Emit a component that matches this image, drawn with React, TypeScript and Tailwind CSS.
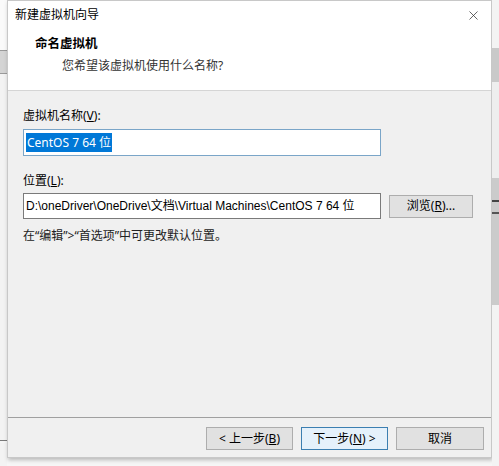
import { X } from "lucide-react";

const cjk = "font-['Segoe_UI','Noto_Sans','Noto_Sans_CJK_SC',sans-serif]";

function WinButton({
  children,
  primary = false,
  width = "w-[87px]",
}: {
  children: React.ReactNode;
  primary?: boolean;
  width?: string;
}) {
  return (
    <button
      className={`${width} h-[23px] flex items-center justify-center text-[12px] text-black border ${
        primary ? "border-[#3c7fb1] bg-[#e5f1fb]" : "border-[#adadad] bg-[#e1e1e1]"
      }`}
    >
      {children}
    </button>
  );
}

export default function App() {
  return (
    <div className={`w-[499px] h-[466px] bg-[#f6f6f6] flex overflow-hidden ${cjk}`}>
      {/* left edge of the window behind */}
      <div className="w-[7px] flex flex-col shrink-0">
        <div className="h-[50px] bg-[#fafafa]" />
        <div className="h-[24px] bg-[#d4d4d4] border-y border-[#9a9a9a]" />
        <div className="flex-1 bg-[#f3f3f3]" />
        <div className="h-[3px] border-t border-[#7a7a7a]" />
        <div className="h-[23px] bg-[#f3f3f3]" />
      </div>

      {/* dialog */}
      <div className="w-[485px] h-[458px] shrink-0 flex flex-col bg-[#f0f0f0] border border-[#c8c8c8] shadow-[1px_2px_4px_rgba(0,0,0,0.25)]">
        <div className="h-[90px] bg-white border-b border-[#d5d5d5] flex flex-col">
          <div className="flex items-center justify-between pl-[7px] pr-[10px] pt-[4px] h-[24px]">
            <span className="text-[12px] text-black leading-none">新建虚拟机向导</span>
            <X className="w-[15px] h-[15px] text-[#333]" strokeWidth={1.2} />
          </div>
          <div className="pl-[27px] mt-[13px] text-[12.5px] font-bold text-black leading-none">命名虚拟机</div>
          <div className="pl-[54px] mt-[9px] text-[12px] text-[#333] leading-none">您希望该虚拟机使用什么名称?</div>
        </div>

        <div className="flex-1 flex flex-col pl-[15px] pt-[19px]">
          <div className="text-[12px] text-black leading-none">
            虚拟机名称(<span className="underline">V</span>):
          </div>
          <div className="mt-[7px] w-[358px] h-[27px] bg-white border border-[#7aa5c8] flex items-center pl-[2px]">
            <span className="bg-[#0078d7] text-white text-[12px] leading-[19px] px-[1px]">CentOS 7 64 位</span>
          </div>

          <div className="mt-[19px] text-[12px] text-black leading-none">
            位置(<span className="underline">L</span>):
          </div>
          <div className="mt-[6px] flex items-center gap-[8px]">
            <div className="w-[358px] h-[26px] bg-white border border-[#7a7a7a] flex items-center pl-[2px] text-[12px] text-black whitespace-nowrap overflow-hidden font-['Liberation_Sans','Noto_Sans_CJK_SC',sans-serif]">
              D:\oneDriver\OneDrive\文档\Virtual Machines\CentOS 7 64 位
            </div>
            <WinButton width="w-[84px]">
              浏览(<span className="underline">R</span>)...
            </WinButton>
          </div>
          <div className="mt-[11px] text-[12px] text-[#222] leading-none">
            在“编辑”&gt;“首选项”中可更改默认位置。
          </div>
        </div>

        <div className="h-[40px] border-t border-[#a0a0a0] flex items-start justify-end gap-[8px] pt-[9px] pr-[7px]">
          <WinButton>
            &lt; 上一步(<span className="underline">B</span>)
          </WinButton>
          <WinButton primary>
            下一步(<span className="underline">N</span>) &gt;
          </WinButton>
          <WinButton width="w-[88px]">取消</WinButton>
        </div>
      </div>

      {/* right edge of the window behind */}
      <div className="w-[7px] flex flex-col shrink-0">
        <div className="h-[48px] bg-[#f3f3f3]" />
        <div className="h-[34px] bg-[#c9c9c9]" />
        <div className="h-[96px] bg-[#eeeeee]" />
        <div className="h-[127px] bg-[#cbcbcb] flex flex-col">
          <div className="h-[22px]" />
          <div className="h-[2px] bg-[#444]" />
          <div className="h-[10px]" />
          <div className="h-[2px] bg-[#555]" />
        </div>
        <div className="flex-1 bg-[#f3f3f3]" />
      </div>
    </div>
  );
}
